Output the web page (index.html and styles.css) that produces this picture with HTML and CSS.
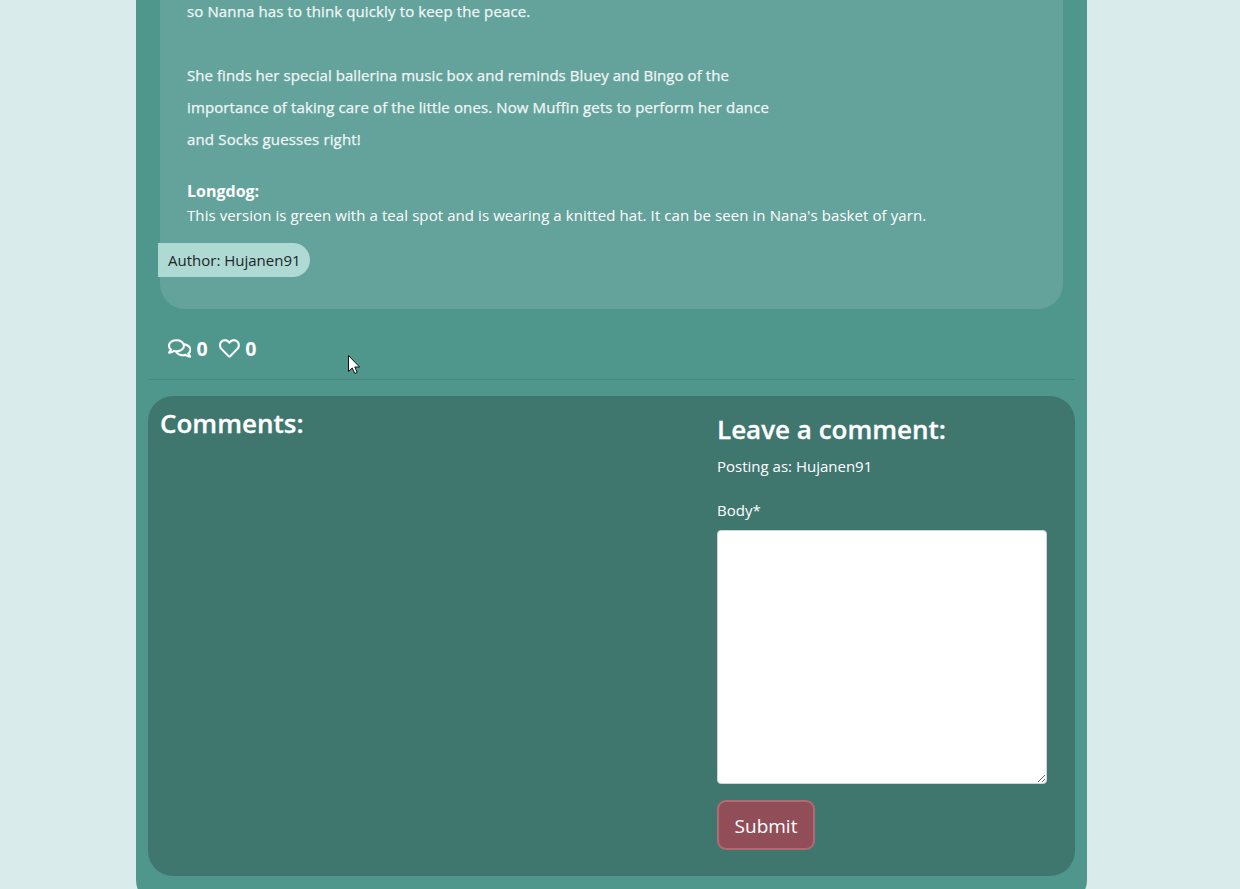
FILE: index.html
```html
<!DOCTYPE html>
<html lang="en">
<head>
<meta charset="utf-8">
<title>Post</title>
<link rel="stylesheet" href="styles.css">
</head>
<body>
<main class="page">
  <article class="post">
    <p class="story"><span class="l1">so Nanna has to think quickly to keep the peace.</span><br><br><span class="l2">She finds her special ballerina music box and reminds Bluey and Bingo of the</span><br><span class="l3">importance of taking care of the little ones. Now Muffin gets to perform her dance</span><br><span class="l4">and Socks guesses right!</span></p>
    <div class="longdog"><strong>Longdog:</strong><br><span class="l5">This version is green with a teal spot and is wearing a knitted hat. It can be seen in Nana's basket of yarn.</span></div>
    <div class="author"><span>Author: Hujanen91</span></div>
  </article>
  <div class="stats">
    <svg class="icon comments-icon" viewBox="0 0 576 512"><path d="M532 386.2c27.5-27.1 44-61.1 44-98.2 0-80-76.5-146.1-176.2-157.9C368.3 72.5 294.3 32 208 32 93.1 32 0 103.6 0 192c0 37 16.5 71 44 98.2-15.3 30.7-37.3 54.5-37.7 54.9-6.3 6.7-8.1 16.5-4.4 25 3.6 8.5 12 14 21.2 14 53.5 0 96.7-20.2 125.2-38.8 9.2 2.1 18.7 3.7 28.4 4.9C208.1 407.6 281.8 448 368 448c20.8 0 40.8-2.4 59.8-6.8C456.3 459.7 499.4 480 553 480c9.2 0 17.5-5.5 21.2-14 3.6-8.5 1.9-18.3-4.4-25-.4-.3-22.5-24.1-37.8-54.8zm-392.8-92.3L122.1 305c-14.1 9.1-28.5 16.3-43.1 21.4 2.7-4.7 5.4-9.7 8-14.8l15.5-31.1L77.7 256C64.2 242.6 48 220.7 48 192c0-60.7 73.3-112 160-112s160 51.3 160 112-73.3 112-160 112c-16.5 0-33-1.9-49-5.6l-19.8-4.5zM498.3 352l-24.7 24.4 15.5 31.1c2.6 5.1 5.3 10.1 8 14.8-14.6-5.1-29-12.3-43.1-21.4l-17.1-11.1-19.9 4.6c-16 3.7-32.5 5.6-49 5.6-54 0-102.2-20.1-131.3-49.7C338 339.5 416 272.9 416 192c0-3.4-.4-6.7-.7-10C479.7 196.5 528 238.8 528 288c0 28.7-16.2 50.6-29.7 64z"/></svg>
    <span class="count">0</span>
    <svg class="icon heart-icon" viewBox="0 0 512 512"><path d="M458.4 64.3C400.6 15.7 311.3 23 256 79.3 200.7 23 111.4 15.6 53.6 64.3-21.6 127.6-10.6 230.8 43 285.5l175.4 178.7c10 10.2 23.4 15.9 37.6 15.9 14.3 0 27.6-5.6 37.6-15.8L469 285.6c53.5-54.7 64.7-157.9-10.6-221.3zm-23.6 187.5L259.4 430.5c-2.4 2.4-4.4 2.4-6.8 0L77.2 251.8c-36.5-37.2-43.9-107.6 7.3-150.7 38.9-32.7 98.9-27.8 136.5 10.5l35 35.7 35-35.7c37.8-38.5 97.8-43.2 136.5-10.6 51.1 43.1 43.5 113.9 7.3 150.8z"/></svg>
    <span class="count">0</span>
  </div>
  <hr class="rule">
  <section class="panel">
    <div class="comments"><h3 class="h-comments">Comments:</h3></div>
    <form class="leave">
      <h3 class="h-leave">Leave a comment:</h3>
      <div class="posting">Posting as: Hujanen91</div>
      <label class="label" for="body">Body*</label>
      <textarea class="body-input" id="body"></textarea>
      <button class="submit" type="button">Submit</button>
    </form>
  </section>
</main>
<svg class="cursor" viewBox="0 0 12 19"><path d="M.5.5V16.5L4.2 13 6.8 18.5 9.2 17.4 6.8 12H11.6Z"/></svg>
</body>
</html>
```
FILE: styles.css
```css
* { box-sizing: border-box; }
html, body { height: 100%; overflow: hidden; }
body {
  margin: 0;
  background: #d9ebea;
  font-family: "Open Sans", "Noto Sans", sans-serif;
  font-size: 15px;
  line-height: 24px;
  color: #fff;
}
.page {
  width: 951px;
  height: 905px;
  margin-left: 136px;
  padding: 0 12px;
  background: #4f978c;
  border-radius: 0 0 25px 25px;
}
.post {
  display: flex;
  flex-direction: column;
  justify-content: flex-end;
  height: 309px;
  margin: 0 12px;
  padding-bottom: 32px;
  background: #64a39b;
  border-radius: 0 0 25px 25px;
  white-space: nowrap;
}
.story { margin: 0; padding-left: 27px; line-height: 32px; color: #f0f7f6; -webkit-text-stroke: .25px #f0f7f6; }
.l1 { letter-spacing: .125px; }
.l2 { letter-spacing: .06px; }
.l3 { letter-spacing: .12px; }
.l4 { letter-spacing: .16px; }
.l5 { letter-spacing: .083px; }
.longdog { padding: 24px 0 0 27px; }
.longdog strong { font-size: 16px; line-height: 23px; }
.author {
  flex: none;
  width: 152px;
  height: 34px;
  margin: 16px 0 0 -2px;
  padding-left: 10px;
  line-height: 34px;
  background: #afd9d3;
  border-radius: 0 17px 17px 0;
  color: #212529;
}
.stats { display: flex; align-items: center; height: 70px; padding: 9px 0 0 20px; }
.icon { fill: #fff; height: 20.8px; stroke: #fff; stroke-width: 5; }
.comments-icon { width: 23.4px; }
.heart-icon { width: 20.8px; margin-left: 11px; }
.count { width: 12px; margin-left: 5px; font-size: 19.5px; font-weight: 700; }
.rule { height: 1px; margin: 0 0 16px; border: 0; background: #46877e; }
.panel { display: flex; height: 480px; background: #3f776f; border-radius: 25px; }
.comments { width: 569px; padding: 11px 0 0 12px; }
.leave { width: 330px; padding-top: 17px; }
h3 { margin: 0; font-size: 26px; line-height: 33px; font-weight: 600; white-space: nowrap; -webkit-text-stroke: .3px #fff; }
.posting { margin-top: 8px; }
.label { display: block; margin: 20px 0 8px; }
.body-input {
  display: block;
  width: 330px;
  height: 254px;
  background: #fff;
  border: 1px solid #ced4da;
  border-radius: 4px;
  resize: vertical;
}
.submit {
  display: block;
  width: 98px;
  height: 50px;
  margin-top: 16px;
  padding: 2px 0 0;
  font: 19px/44px "Open Sans", "Noto Sans", sans-serif;
  color: #fff;
  background: #914e59;
  border: 2px solid #b26a72;
  border-radius: 9px;
}
.cursor { position: absolute; left: 348px; top: 355px; width: 12px; height: 19px; fill: #fff; stroke: #111; stroke-width: 1; }
```
